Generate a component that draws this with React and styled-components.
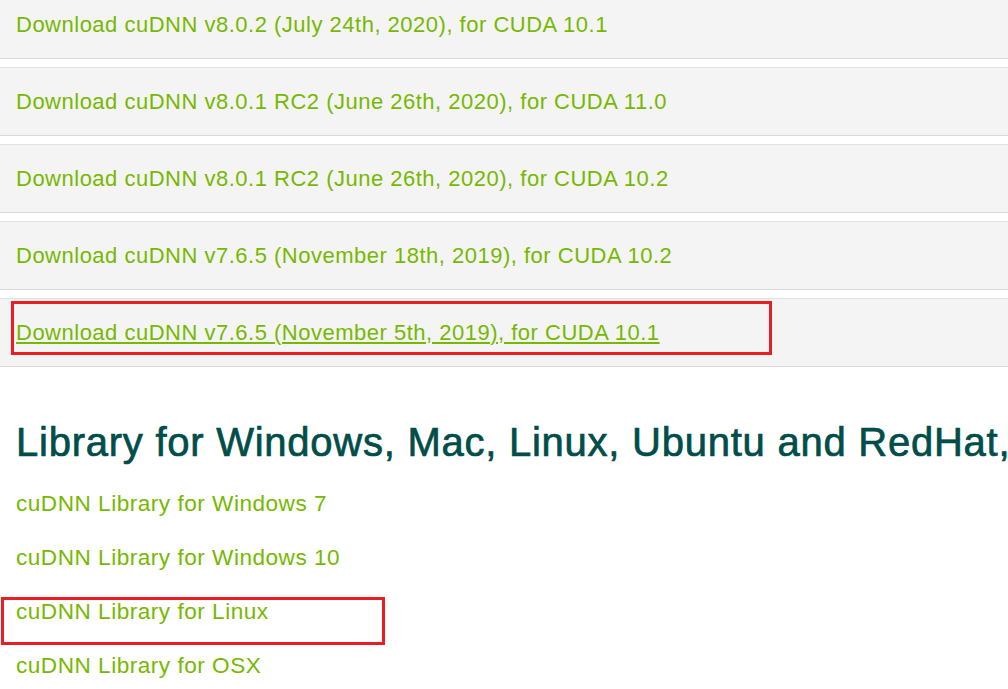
import styled, { createGlobalStyle } from "styled-components"

const GlobalStyle = createGlobalStyle`
  html, body {
    margin: 0;
    padding: 0;
    background: #ffffff;
    overflow: hidden;
  }
  body {
    font-family: "Liberation Sans", Arial, sans-serif;
  }
  * { box-sizing: border-box; }
`

const downloads = [
    "Download cuDNN v8.0.2 (July 24th, 2020), for CUDA 10.1",
    "Download cuDNN v8.0.1 RC2 (June 26th, 2020), for CUDA 11.0",
    "Download cuDNN v8.0.1 RC2 (June 26th, 2020), for CUDA 10.2",
    "Download cuDNN v7.6.5 (November 18th, 2019), for CUDA 10.2",
    "Download cuDNN v7.6.5 (November 5th, 2019), for CUDA 10.1",
]

const libraries = [
    "cuDNN Library for Windows 7",
    "cuDNN Library for Windows 10",
    "cuDNN Library for Linux",
    "cuDNN Library for OSX",
]

export default function App() {
    return (<>
        <GlobalStyle />
        <Page>
            <DownloadList>
                {downloads.map((text, i) => (
                    <DownloadRow key={text}>
                        <GreenLink href="#" $underline={i === 4}>{text}</GreenLink>
                        {i === 4 && <Highlight $top={2} $left={11} $width={761} $height={54} />}
                    </DownloadRow>
                ))}
            </DownloadList>
            <Section>
                <Heading>Library for Windows, Mac, Linux, Ubuntu and RedHat, Centos</Heading>
                <LibraryList>
                    {libraries.map((text, i) => (
                        <LibraryItem key={text}>
                            <GreenLink href="#" $size={22.6}>{text}</GreenLink>
                            {i === 2 && <Highlight $top={12} $left={-15} $width={384} $height={48} />}
                        </LibraryItem>
                    ))}
                </LibraryList>
            </Section>
        </Page>
    </>)
}

const Page = styled.div`
    width: 1008px;
    height: 689px;
    overflow: hidden;
`
const DownloadList = styled.div`
    display: flex;
    flex-direction: column;
    gap: 8px;
    margin-top: -10px;
`
const DownloadRow = styled.div`
    position: relative;
    display: flex;
    align-items: center;
    height: 69px;
    padding-left: 16px;
    background-color: #f4f4f4;
    border-top: 1px solid #e2e2e2;
    border-bottom: 1px solid #d9d9d9;
`
const GreenLink = styled.a`
    color: #76b900;
    font-size: ${({ $size }) => $size || 22}px;
    line-height: 26px;
    letter-spacing: 0.5px;
    white-space: nowrap;
    text-decoration: ${({ $underline }) => $underline ? "underline" : "none"};
    text-decoration-thickness: 2px;
    text-underline-offset: 2px;
`
const Highlight = styled.div`
    position: absolute;
    top: ${({ $top }) => $top}px;
    left: ${({ $left }) => $left}px;
    width: ${({ $width }) => $width}px;
    height: ${({ $height }) => $height}px;
    border: 3px solid #ec1c24;
    pointer-events: none;
`
const Section = styled.div`
    padding: 51px 16px 0 16px;
`
const Heading = styled.h2`
    margin: 0;
    color: #004d4a;
    font-size: 40px;
    font-weight: 400;
    line-height: 48px;
    letter-spacing: 0.75px;
    -webkit-text-stroke: 0.7px #004d4a;
    white-space: nowrap;
`
const LibraryList = styled.div`
    display: flex;
    flex-direction: column;
    margin-top: 11px;
`
const LibraryItem = styled.div`
    position: relative;
    height: 54px;
    display: flex;
    align-items: center;
`
